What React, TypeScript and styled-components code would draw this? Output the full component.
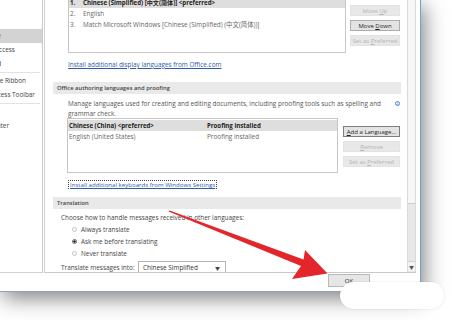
import React from "react";
import styled, { createGlobalStyle } from "styled-components";

const Global = createGlobalStyle`
  html, body { margin: 0; padding: 0; background: #fff; }
  body { font-family: "Open Sans", "Noto Sans", "Noto Sans CJK SC", sans-serif; }
  #root { width: 452px; height: 320px; }
`;

const Page = styled.div`
  position: relative;
  width: 452px;
  height: 320px;
  overflow: hidden;
  background: #fff;
`;

const Dialog = styled.div`
  width: 421px;
  height: 292px;
  box-sizing: border-box;
  border-right: 1px solid #72a0d6;
  border-bottom: 1px solid #8aa4c2;
  background: #fff;
  display: flex;
  flex-direction: column;
  box-shadow: 3px 6px 20px rgba(0, 0, 0, 0.5);
`;

const Body = styled.div`
  height: 273px;
  display: flex;
`;

const Sidebar = styled.div`
  width: 43px;
  box-sizing: border-box;
  border-right: 1px solid #c8c8c8;
  border-bottom: 1px solid #d2d2d2;
  overflow: hidden;
`;

const SideList = styled.div`
  margin-left: -28px;
  padding-top: 29px;
  display: flex;
  flex-direction: column;
`;

const SideItem = styled.div<{ $selected?: boolean }>`
  height: 14px;
  line-height: 14px;
  white-space: nowrap;
  font-size: 6.4px;
  color: #444;
  background: ${(p) => (p.$selected ? "#d3d3d3" : "transparent")};
`;

const SideSep = styled.div`
  height: 1px;
  margin: 1px 2px 1px 28px;
  background: #e2e2e2;
`;

const ContentPanel = styled.div`
  flex: 1;
  min-width: 0;
  display: flex;
  margin-left: 1px;
  margin-right: 4px;
  border-left: 1px solid #d2d2d2;
  border-bottom: 1px solid #c8c8c8;
`;

const Scroller = styled.div`
  flex: 1;
  min-width: 0;
  overflow: hidden;
  padding: 0 6px 0 8px;
`;

const ScrollInner = styled.div`
  margin-top: -5px;
  display: flex;
  flex-direction: column;
  font-size: 6.4px;
  color: #444;
`;

const ScrollBar = styled.div`
  width: 9px;
  box-sizing: border-box;
  border-left: 1px solid #dadada;
  border-right: 1px solid #dadada;
  background: #e8e8e8;
  display: flex;
  flex-direction: column;
`;

const Thumb = styled.div`
  height: 203px;
  background: #f7f7f7;
  border-bottom: 1px solid #cdcdcd;
`;

const Track = styled.div`
  flex: 1;
`;

const ArrowBox = styled.div`
  height: 9px;
  margin-bottom: 1px;
  background: #f4f4f4;
  border-top: 1px solid #d0d0d0;
  display: flex;
  align-items: center;
  justify-content: center;
  font-size: 5px;
  color: #555;
`;

const PickRow = styled.div<{ $indent: number; $gap: number; $btnTop: number }>`
  display: flex;
  padding-left: ${(p) => p.$indent}px;
  gap: ${(p) => p.$gap}px;
  & > aside {
    padding-top: ${(p) => p.$btnTop}px;
  }
`;

const ListBox = styled.div<{ $w: number; $h: number }>`
  width: ${(p) => p.$w}px;
  height: ${(p) => p.$h}px;
  box-sizing: border-box;
  border: 1px solid #c6c6c6;
  padding-top: 1px;
  background: #fff;
  display: flex;
  flex-direction: column;
`;

const ListRow = styled.div<{ $selected?: boolean }>`
  height: 11px;
  line-height: 11px;
  display: flex;
  white-space: nowrap;
  padding-left: 1px;
  background: ${(p) => (p.$selected ? "#dedede" : "transparent")};
  font-weight: ${(p) => (p.$selected ? 700 : 400)};
  font-size: ${(p) => (p.$selected ? 6.1 : 6.4)}px;
  color: ${(p) => (p.$selected ? "#222" : "#666")};
`;

const Cell = styled.span<{ $w?: number }>`
  width: ${(p) => (p.$w ? `${p.$w}px` : "auto")};
  flex: none;
`;

const ButtonCol = styled.aside<{ $w: number }>`
  width: ${(p) => p.$w}px;
  display: flex;
  flex-direction: column;
  gap: 4px;
`;

const Btn = styled.button<{ $disabled?: boolean; $focused?: boolean }>`
  all: unset;
  height: 11px;
  box-sizing: border-box;
  display: flex;
  align-items: center;
  justify-content: center;
  font-family: "Open Sans", "Noto Sans", sans-serif;
  font-size: 6px;
  white-space: nowrap;
  background: ${(p) => (p.$disabled ? "#e8e8e8" : "#e3e3e3")};
  border: 1px solid
    ${(p) => (p.$disabled ? "#e3e3e3" : p.$focused ? "#7d7d7d" : "#acacac")};
  color: ${(p) => (p.$disabled ? "#b4b4b4" : "#1e1e1e")};
`;

const Link = styled.div<{ $indent: number; $top: number; $focus?: boolean }>`
  align-self: flex-start;
  margin-left: ${(p) => p.$indent}px;
  margin-top: ${(p) => p.$top}px;
  height: ${(p) => (p.$focus ? 9 : 10)}px;
  line-height: ${(p) => (p.$focus ? 7 : 10)}px;
  box-sizing: border-box;
  color: #2f5ca6;
  text-decoration: underline;
  white-space: nowrap;
  font-size: ${(p) => (p.$focus ? 6.1 : 6.4)}px;
  border: ${(p) => (p.$focus ? "1px dotted #444" : "none")};
  padding: 0 ${(p) => (p.$focus ? 1 : 0)}px;
`;

const SectionHeader = styled.div<{ $top: number }>`
  margin-top: ${(p) => p.$top}px;
  height: 12px;
  line-height: 12px;
  padding-left: 4px;
  background: #e9e9e9;
  color: #444;
  font-weight: 600;
  font-size: 5.8px;
`;

const Description = styled.div`
  margin-top: 5px;
  padding-left: 15px;
  display: flex;
  gap: 6px;
  line-height: 9.5px;
  color: #555;
`;

const DescText = styled.div`
  flex: 1;
`;

const InfoIcon = styled.span`
  width: 5px;
  height: 5px;
  margin-top: 2px;
  margin-right: 1px;
  box-sizing: border-box;
  border: 0.7px solid #4a86d4;
  border-radius: 50%;
  color: #4a86d4;
  font-size: 4px;
  line-height: 4px;
  text-align: center;
  font-weight: 700;
`;

const Plain = styled.div<{ $indent: number; $top: number; $h: number }>`
  margin-top: ${(p) => p.$top}px;
  padding-left: ${(p) => p.$indent}px;
  height: ${(p) => p.$h}px;
  line-height: ${(p) => p.$h}px;
  white-space: nowrap;
  color: #444;
`;

const RadioRow = styled.div`
  height: 12px;
  display: flex;
  align-items: center;
  gap: 4px;
  padding-left: 19px;
  white-space: nowrap;
  color: #444;
`;

const RadioDot = styled.span<{ $checked?: boolean }>`
  width: 5px;
  height: 5px;
  box-sizing: border-box;
  border-radius: 50%;
  border: 0.8px solid ${(p) => (p.$checked ? "#666" : "#c4c4c4")};
  background: ${(p) => (p.$checked ? "radial-gradient(circle, #222 45%, #fff 55%)" : "#fff")};
`;

const SelectRow = styled.div`
  margin-top: 2px;
  padding-left: 8px;
  height: 12px;
  display: flex;
  align-items: center;
  white-space: nowrap;
  color: #444;
`;

const SelectLabel = styled.span`
  width: 77px;
  flex: none;
`;

const Combo = styled.div`
  width: 88px;
  height: 12px;
  box-sizing: border-box;
  border: 1px solid #b4b4b4;
  display: flex;
  align-items: center;
  justify-content: space-between;
  padding: 0 5px 0 4px;
  color: #333;
`;

const Caret = styled.span`
  font-size: 5px;
  color: #444;
`;

const Footer = styled.div`
  flex: 1;
  display: flex;
  justify-content: flex-end;
  padding: 1px 50px 0 0;
`;

const OkButton = styled.button`
  all: unset;
  width: 42px;
  height: 13px;
  box-sizing: border-box;
  border: 1px solid #b9b9b9;
  background: #e6e6e6;
  font-family: "Open Sans", "Noto Sans", sans-serif;
  font-size: 6px;
  color: #333;
  display: flex;
  align-items: center;
  justify-content: center;
`;

const Blob = styled.div`
  position: absolute;
  left: 340px;
  top: 282px;
  width: 104px;
  height: 27px;
  border-radius: 14px 13px 13px 14px;
  background: #fff;
  box-shadow: 0 0 2px rgba(0, 0, 0, 0.12);
`;

const ArrowSvg = styled.svg`
  position: absolute;
  left: 0;
  top: 0;
  pointer-events: none;
`;

export default function App() {
  return (
    <Page>
      <Global />
      <Dialog>
        <Body>
          <Sidebar>
            <SideList>
              <SideItem $selected>Language</SideItem>
              <SideItem>Ease of Access</SideItem>
              <SideItem>Advanced</SideItem>
              <SideSep />
              <SideItem>Customize Ribbon</SideItem>
              <SideItem>Quick Access Toolbar</SideItem>
              <SideSep />
              <SideItem>Add-ins</SideItem>
              <SideItem>Trust Center</SideItem>
            </SideList>
          </Sidebar>
          <ContentPanel>
            <Scroller>
              <ScrollInner>
                <PickRow $indent={15} $gap={4} $btnTop={10}>
                  <ListBox $w={278} $h={58}>
                    <ListRow $selected>
                      <Cell $w={13}>1.</Cell>
                      <Cell>Chinese (Simplified) [中文(简体)] &lt;preferred&gt;</Cell>
                    </ListRow>
                    <ListRow>
                      <Cell $w={13}>2.</Cell>
                      <Cell>English</Cell>
                    </ListRow>
                    <ListRow>
                      <Cell $w={13}>3.</Cell>
                      <Cell>Match Microsoft Windows [Chinese (Simplified) (中文(简体))]</Cell>
                    </ListRow>
                  </ListBox>
                  <ButtonCol $w={50}>
                    <Btn $disabled>
                      Move&nbsp;<u>U</u>p
                    </Btn>
                    <Btn>
                      Move&nbsp;<u>D</u>own
                    </Btn>
                    <Btn $disabled>
                      Set as&nbsp;<u>P</u>referred
                    </Btn>
                  </ButtonCol>
                </PickRow>
                <Link $indent={15} $top={7}>
                  Install additional display languages from Office.com
                </Link>

                <SectionHeader $top={12}>Office authoring languages and proofing</SectionHeader>
                <Description>
                  <DescText>
                    Manage languages used for creating and editing documents, including proofing tools such as spelling and
                    grammar check.
                  </DescText>
                  <InfoIcon>i</InfoIcon>
                </Description>
                <PickRow $indent={14} $gap={5} $btnTop={8}>
                  <ListBox $w={271} $h={55}>
                    <ListRow $selected>
                      <Cell $w={138}>Chinese (China) &lt;preferred&gt;</Cell>
                      <Cell>Proofing installed</Cell>
                    </ListRow>
                    <ListRow>
                      <Cell $w={138}>English (United States)</Cell>
                      <Cell>Proofing installed</Cell>
                    </ListRow>
                  </ListBox>
                  <ButtonCol $w={57}>
                    <Btn $focused>
                      <u>A</u>dd a Language...
                    </Btn>
                    <Btn $disabled>
                      <u>R</u>emove
                    </Btn>
                    <Btn $disabled>
                      Set as&nbsp;<u>P</u>referred
                    </Btn>
                  </ButtonCol>
                </PickRow>
                <Link $indent={15} $top={7} $focus>
                  Install additional keyboards from Windows Settings
                </Link>

                <SectionHeader $top={8}>Translation</SectionHeader>
                <Plain $indent={8} $top={4} $h={10}>
                  Choose how to handle messages received in other languages:
                </Plain>
                <RadioRow>
                  <RadioDot />
                  Always translate
                </RadioRow>
                <RadioRow>
                  <RadioDot $checked />
                  Ask me before translating
                </RadioRow>
                <RadioRow>
                  <RadioDot />
                  Never translate
                </RadioRow>
                <SelectRow>
                  <SelectLabel>Translate messages into:</SelectLabel>
                  <Combo>
                    Chinese Simplified
                    <Caret>▼</Caret>
                  </Combo>
                </SelectRow>
              </ScrollInner>
            </Scroller>
            <ScrollBar>
              <Thumb />
              <Track />
              <ArrowBox>▼</ArrowBox>
            </ScrollBar>
          </ContentPanel>
        </Body>
        <Footer>
          <OkButton>OK</OkButton>
        </Footer>
      </Dialog>
      <Blob />
      <ArrowSvg width={452} height={320} viewBox="0 0 452 320">
        <polygon
          points="169.6,210.4 303.5,259.5 305,250 327.5,273.5 292,279 301,266 168.5,211.4"
          fill="#e3262b"
        />
      </ArrowSvg>
    </Page>
  );
}
